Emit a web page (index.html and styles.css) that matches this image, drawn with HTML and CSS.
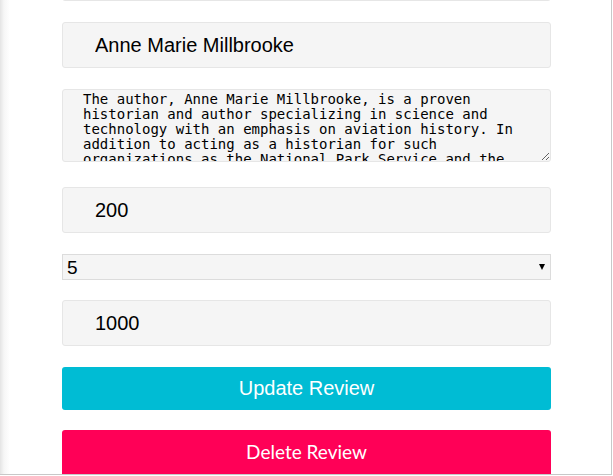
FILE: index.html
```html
<!DOCTYPE html>
<html lang="en">
<head>
<meta charset="utf-8">
<title>Edit Review</title>
<link rel="stylesheet" href="styles.css">
</head>
<body>
<div class="card">
  <form class="review-form">
    <input class="field" type="text" value="A Book Title">
    <input class="field" type="text" value="Anne Marie Millbrooke">
    <textarea class="field-area">The author, Anne Marie Millbrooke, is a proven historian and author specializing in science and technology with an emphasis on aviation history. In addition to acting as a historian for such organizations as the National Park Service and the United States Air Force, she has taught history at several colleges and universities.</textarea>
    <input class="field" type="text" value="200">
    <div class="select-wrap">
      <select class="field-select">
        <option>1</option>
        <option>2</option>
        <option>3</option>
        <option>4</option>
        <option selected>5</option>
      </select>
    </div>
    <input class="field" type="text" value="1000">
    <button class="btn btn-update" type="button">Update Review</button>
    <button class="btn btn-delete" type="button">Delete Review</button>
  </form>
</div>
</body>
</html>
```
FILE: styles.css
```css
html, body {
  margin: 0;
  padding: 0;
  background: #fff;
}

.card {
  width: 611px;
  height: 474px;
  border-right: 1px solid #c8c8c8;
  border-bottom: 1px solid #c8c8c8;
  background: linear-gradient(to right, #e4e4e4 0, #f6f6f6 4px, #fff 10px);
  overflow: hidden;
}

.review-form {
  display: flex;
  flex-direction: column;
  width: 489px;
  margin: -45px 0 0 62px;
}

.field {
  box-sizing: border-box;
  height: 46px;
  margin: 0 0 21px 0;
  padding: 0 31px 0 32px;
  border: 1px solid #e6e6e6;
  border-radius: 3px;
  background: #f5f5f5;
  font: 20px "Liberation Sans", Arial, sans-serif;
  color: #000;
  outline: none;
}

.field-area {
  box-sizing: border-box;
  height: 73px;
  margin: 0 0 25px 0;
  padding: 2px 20px;
  border: 1px solid #e6e6e6;
  border-radius: 3px;
  background: #f5f5f5;
  font: 14px "DejaVu Sans Mono", monospace;
  line-height: 15px;
  color: #000;
  overflow: hidden;
  resize: vertical;
  outline: none;
}

.select-wrap {
  position: relative;
  margin: 0 0 20px 0;
}

.select-wrap::after {
  content: "";
  position: absolute;
  right: 6px;
  top: 10px;
  border-left: 3.5px solid transparent;
  border-right: 3.5px solid transparent;
  border-top: 6px solid #000;
  pointer-events: none;
}

.field-select {
  display: block;
  box-sizing: border-box;
  width: 100%;
  height: 26px;
  margin: 0;
  padding: 0 4px;
  border: 1px solid #dcdcdc;
  border-radius: 0;
  background: #f5f5f5;
  font: 19px "Liberation Sans", Arial, sans-serif;
  color: #000;
  appearance: none;
  -webkit-appearance: none;
  outline: none;
}

.btn {
  box-sizing: border-box;
  height: 43px;
  margin: 0 0 20px 0;
  padding: 0;
  border: none;
  border-radius: 3px;
  color: #fff;
  font-size: 20px;
  cursor: pointer;
}

.btn-update {
  background: #00bcd4;
  font-family: "Liberation Sans", Arial, sans-serif;
}

.btn-delete {
  height: 46px;
  padding-bottom: 3px;
  background: #ff0057;
  font-family: Lato, "Liberation Sans", sans-serif;
  font-size: 19px;
  font-weight: 400;
}
```
